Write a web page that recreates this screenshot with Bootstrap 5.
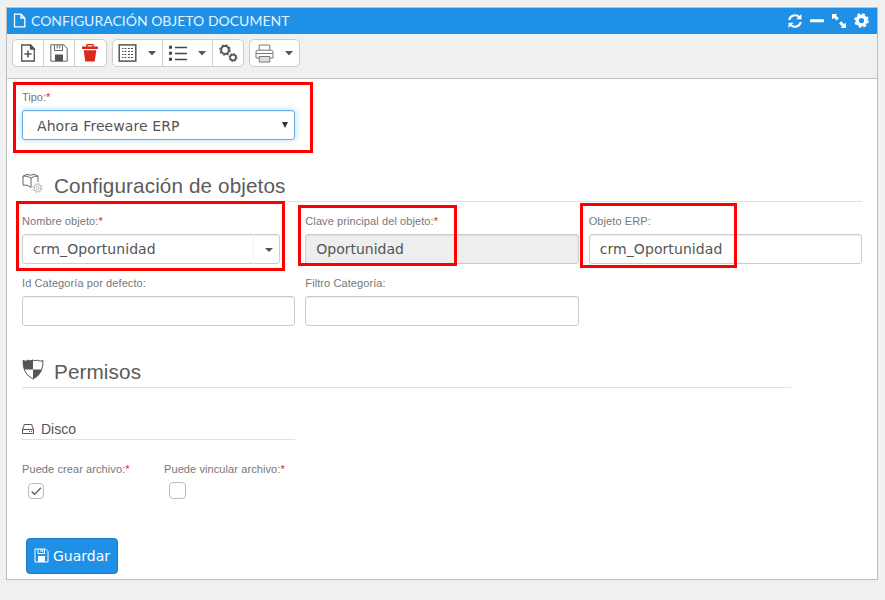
<!DOCTYPE html>
<html lang="es">
<head>
<meta charset="utf-8">
<meta name="viewport" content="width=device-width, initial-scale=1">
<title>Configuración objeto document</title>
<link href="https://cdn.jsdelivr.net/npm/bootstrap@5.3.0/dist/css/bootstrap.min.css" rel="stylesheet">
<style>
body{background:#eff1f0;color:#555;font-family:"Liberation Sans",Arial,sans-serif;height:600px;overflow:hidden}
svg{display:block;flex:none}
.panel{margin:7px 7px 0 6px;height:573px;border:1px solid #bdbfbf;background:#fff}
.panel-head{height:26px;background:#1e91e6;color:#fff;padding:0 8px 0 6px}
.panel-title{font:14px/26px Lato,sans-serif;letter-spacing:0;margin-left:5px;color:#e4f2fd}
.head-icons{gap:8px;margin-top:-1px}
.tools{height:45px;background:#eff1f0;border-bottom:1px solid #bdbfbf;padding:5px 5px 0;gap:5px}
.tools .btn{--bs-btn-bg:#fff;--bs-btn-border-color:#ccc;--bs-btn-color:#555;--bs-btn-padding-x:0;--bs-btn-padding-y:0;--bs-btn-border-radius:5px;height:28px;width:32px;display:flex;align-items:center;justify-content:center}
.tools .btn.trash{width:33px;padding-right:1px}
.tools .btn.wide{width:51px;justify-content:space-between;padding:0 6px 0 5px}
.panel-body{padding:0 15px}
.panel-body .row{--bs-gutter-x:10px}
.field-label{display:block;font-size:11px;line-height:14px;color:#777;letter-spacing:.09px;white-space:nowrap;margin-bottom:6px}
.field-label.tight{letter-spacing:0}
.req{color:#d9232e}
.panel-body .form-control,.panel-body .form-select{font:14px/20px "DejaVu Sans",Verdana,sans-serif;height:30px;padding:4px 10px;border:1px solid #ccc;border-radius:3px;color:#555;box-shadow:inset 0 1px 1px rgba(0,0,0,.075);letter-spacing:.08px}
.panel-body .form-control:disabled{background:#eee;opacity:1;letter-spacing:-.02px}
.panel-body .form-select.active-select{border-color:#66afe9;box-shadow:inset 0 1px 1px rgba(0,0,0,.075),0 0 6px rgba(102,175,233,.5);background:#fff;padding:5px 14px 3px}
.combo{width:258px}
.combo-arrow{position:absolute;right:0;top:0;width:27px;height:30px;border-left:1px solid #f3f3f3;padding:14px 0 0 11px}
.select-arrow{position:absolute;right:7px;top:12px}
.tipo{padding-top:11px;height:92px}
.section-title{font-size:20.7px;line-height:24px;border-bottom:1px solid #e1e1e1;color:#5b5b5b;margin:0;font-weight:400;letter-spacing:.11px}
.objects{height:31px;padding-top:3px}
.objects svg{margin:-1px 11px 0 0}
.labels{padding-top:12px}
.perms{width:769px;margin-top:33px;height:29px}
.perms svg{margin:0 10px 0 0}
.perms span{padding-top:1px}
.disk-head{width:273px;margin:32px 0 0;height:20px;border-bottom:1px solid #e1e1e1;font-size:14px;line-height:18px;font-weight:400}
.disk-head svg{margin:4px 7px 0 0}
.checks{margin-top:22px;height:76px}
.check-one{width:142px}
.panel-body .form-check-input{display:block;width:16px;height:16px;margin:7px 0 0 6px;border:1px solid #bbb;border-radius:4px;background:#fff}
.panel-body .check-big{width:17px;height:17px;margin-left:5px;margin-top:6px}
.tick{position:absolute;left:9px;top:25px}
.save{--bs-btn-bg:#1e91e6;--bs-btn-border-color:#1a79c0;--bs-btn-color:#fff;margin-left:4px;width:92px;height:36px;border-radius:4px;font:14px/34px "DejaVu Sans",Verdana,sans-serif;padding:0 0 0 7px;gap:4px}
.save svg{margin-top:-2px}
.hl{position:absolute;border:3px solid #f00;pointer-events:none;z-index:3}
.hl-tipo{left:-9px;top:-8px;width:300px;height:71px}
.hl-nombre{left:-6px;top:-13px;width:269px;height:70px}
.hl-clave{left:-7px;top:-9px;width:159px;height:61px}
.hl-erp{left:-9px;top:-11px;width:157px;height:65px}
</style>
</head>
<body>
<main class="panel">
<header class="panel-head d-flex align-items-center">
<svg width="13" height="16" viewBox="0 0 13 16" fill="none" stroke="#fff" stroke-width="1.3"><path d="M1.5 1.2H8L11.8 5V13.8H1.5ZM8 1.2V5h3.8"/></svg>
<span class="panel-title">CONFIGURACIÓN OBJETO DOCUMENT</span>
<div class="head-icons d-flex align-items-center ms-auto">
<svg width="14" height="14" viewBox="0 0 14 14" fill="none" stroke="#fff" stroke-width="2"><path d="M1.2 6A6 5.7 0 0 1 11.5 3.2M12.8 8A6 5.7 0 0 1 2.5 10.8"/><path d="M13.5 0v5.2H8.3ZM.5 14V8.8h5.2Z" fill="#fff" stroke="none"/></svg>
<svg width="14" height="14" viewBox="0 0 14 14" fill="#fff"><rect y="5.3" width="14" height="3" rx=".8"/></svg>
<svg width="14" height="14" viewBox="0 0 14 14" fill="#fff"><path d="M0 0h5.4L4 1.5 6.9 4.3 4.8 6.4 1.8 3.7 0 5.4ZM14 14H8.6l1.6-1.6L7 9.6 9.2 7.3l3 3L14 8.6Z"/></svg>
<svg width="15" height="15" viewBox="0 0 16 16"><circle cx="8" cy="8" r="4.6" fill="none" stroke="#fff" stroke-width="3.6"/><circle cx="8" cy="8" r="6.7" fill="none" stroke="#fff" stroke-width="2.2" stroke-dasharray="2.9 2.36"/></svg>
</div>
</header>
<div class="tools d-flex align-items-start">
<div class="btn-group">
<button class="btn" aria-label="Nuevo"><svg width="16" height="18" viewBox="0 0 16 18" fill="none" stroke="#555" stroke-width="1.3"><path d="M1.7 1H10.5L14.3 5V17H1.7Z"/><path d="M10.5 1 14.3 5H10.5Z" fill="#555"/><path d="M8 6.5v7M4.5 10h7" stroke-width="1.6"/></svg></button>
<button class="btn" aria-label="Guardar"><svg width="18" height="18" viewBox="0 0 18 18" fill="none" stroke="#666"><path d="M.8.8H14L17.2 4.5V17.2H.8ZM4.5 1V6.5H12.5V1M7.2 1V4.5M9.8 1V4.5"/><path d="M5 10.5h8v6.7H5Z" fill="#555" stroke="none"/></svg></button>
<button class="btn trash" aria-label="Eliminar"><svg width="16" height="18" viewBox="0 0 16 18" fill="#d9291c"><path d="M0 2.5H4.3V.5Q4.3 0 5 0H11q.7 0 .7.5V2.5H16V5H0ZM1.7 6.2H14.3L12.7 17.5H3.3ZM5.7 1.2V2.5h4.6V1.2Z" fill-rule="evenodd"/></svg></button>
</div>
<div class="btn-group">
<button class="btn wide" aria-label="Tabla"><svg width="19" height="18" viewBox="0 0 19 18" fill="none" stroke="#555"><rect x="1.2" y=".9" width="16.6" height="16.2" stroke-width="1.5"/><path d="M4 4.5h1.5M6.5 4.5h2M10 4.5h2M13 4.5h2M4 7.5h1.5M6.5 7.5h2M10 7.5h2M13 7.5h2M4 10.5h1.5M6.5 10.5h2M10 10.5h2M13 10.5h2M4 13.5h1.5M6.5 13.5h2M10 13.5h2M13 13.5h2"/></svg><svg width="8" height="5" viewBox="0 0 8 5"><path d="M0 0h8L4 4.5Z" fill="#555"/></svg></button>
<button class="btn wide" aria-label="Lista"><svg width="19" height="18" viewBox="0 0 19 18" fill="#444"><path d="M1 1.8h3v3H1ZM1 7.8h3v3H1ZM1 13.8h3v3H1ZM7 2.7h12v1.5H7ZM7 8.7h12v1.5H7ZM7 14.7h12v1.5H7Z"/></svg><svg width="8" height="5" viewBox="0 0 8 5"><path d="M0 0h8L4 4.5Z" fill="#555"/></svg></button>
<button class="btn" aria-label="Opciones"><svg width="19" height="19" viewBox="0 0 19 19" fill="none" stroke="#555"><circle cx="6" cy="6" r="3.9" stroke-width="2"/><circle cx="6" cy="6" r="5.2" stroke-width="1.2" stroke-dasharray="2 2.08"/><circle cx="14" cy="13.5" r="2.9" stroke-width="1.7"/><circle cx="14" cy="13.5" r="4" stroke-width="1" stroke-dasharray="1.5 1.64"/></svg></button>
</div>
<div class="btn-group">
<button class="btn wide" aria-label="Imprimir"><svg width="19" height="19" viewBox="0 0 19 19" fill="none" stroke="#777"><path d="M4.2 6V1H14.8V6M4 14H1V8Q1 6.2 2.8 6.2H16.2Q18 6.2 18 8V14H15M1.3 9.5H17.7"/><path d="M4.2 12.5H14.8V18H4.2Z" fill="#ddd"/></svg><svg width="8" height="5" viewBox="0 0 8 5"><path d="M0 0h8L4 4.5Z" fill="#555"/></svg></button>
</div>
</div>
<div class="panel-body">
<div class="tipo row">
<div class="col-4"><div class="position-relative">
<label class="field-label tight">Tipo:<span class="req">*</span></label>
<div class="position-relative"><div class="form-select active-select">Ahora Freeware ERP</div><svg class="select-arrow" width="6" height="6" viewBox="0 0 6 6"><path d="M0 0h6L3 6Z" fill="#333"/></svg></div>
<div class="hl hl-tipo"></div>
</div></div>
</div>
<h2 class="section-title objects d-flex align-items-start">
<svg width="21" height="21" viewBox="0 0 21 21" fill="none" stroke="#666"><path d="M1 3.2Q5 0 8.5 2.2 12 0 16 3.2V9M1 3.2V12.2Q5 11 9 14.5V5.2Q5 2.2 1 3.2ZM9 5.2Q12 2.5 16 3.2"/><g stroke="#bbb"><circle cx="15.5" cy="15" r="3.6"/><circle cx="15.5" cy="15" r="1.6"/><circle cx="15.5" cy="15" r="4.6" stroke-dasharray="1.8 1.81"/></g></svg>
<span>Configuración de objetos</span></h2>
<div class="row labels">
<div class="col-4"><div class="position-relative"><label class="field-label">Nombre objeto:<span class="req">*</span></label>
<div class="position-relative combo"><input class="form-control" value="crm_Oportunidad"><span class="combo-arrow"><svg width="8" height="4" viewBox="0 0 8 4"><path d="M0 0h8L4 4Z" fill="#555"/></svg></span></div>
<div class="hl hl-nombre"></div></div></div>
<div class="col-4"><div class="position-relative"><label class="field-label">Clave principal del objeto:<span class="req">*</span></label><input class="form-control" value="Oportunidad" disabled>
<div class="hl hl-clave"></div></div></div>
<div class="col-4"><div class="position-relative"><label class="field-label">Objeto ERP:</label><input class="form-control" value="crm_Oportunidad">
<div class="hl hl-erp"></div></div></div>
</div>
<div class="row labels">
<div class="col-4"><label class="field-label">Id Categoría por defecto:</label><input class="form-control"></div>
<div class="col-4"><label class="field-label">Filtro Categoría:</label><input class="form-control"></div>
</div>
<h2 class="section-title perms d-flex align-items-start">
<svg width="22" height="21" viewBox="0 0 22 21"><path d="M1 1.5Q4 3 6.5 1.2 9 2.5 11 1 13 2.5 15.5 1.2 18 3 21 1.5 21.5 15 11 20 .5 15 1 1.5Z" fill="#fff" stroke="#555"/><path d="M1 1.5Q4 3 6.5 1.2 9 2.5 11 1V10.5H2.4Q1 6 1 1.5ZM11 10.5h8.6Q17.5 17 11 20Z" fill="#555"/></svg>
<span>Permisos</span></h2>
<h3 class="disk-head d-flex align-items-start">
<svg width="12" height="10" viewBox="0 0 12 10" fill="none" stroke="#555"><path d="M.5 5.5 2.4.5H9.6L11.5 5.5V9.5H.5ZM.5 5.5h11M7 7.5h1M9 7.5h1"/></svg><span>Disco</span></h3>
<div class="checks d-flex">
<div class="check-one position-relative"><label class="field-label">Puede crear archivo:<span class="req">*</span></label><input class="form-check-input" type="checkbox"><svg class="tick" width="11" height="9" viewBox="0 0 11 9" fill="none" stroke="#666" stroke-width="1.5"><path d="M.7 4.6 3.7 7.2 10 .8"/></svg></div>
<div><label class="field-label">Puede vincular archivo:<span class="req">*</span></label><input class="form-check-input check-big" type="checkbox"></div>
</div>
<button class="btn save d-flex align-items-center"><svg width="15" height="15" viewBox="0 0 15 15" fill="none" stroke="#fff"><path d="M1 1H11.5L14 3.5V14H1ZM4 1V5.5H10.5V1M7 1V4M8.7 1V4"/><path d="M4 8h7v6H4Z" fill="#fff" stroke="none"/></svg><span>Guardar</span></button>
</div>
</main>
<script src="https://cdn.jsdelivr.net/npm/bootstrap@5.3.0/dist/js/bootstrap.bundle.min.js"></script>
</body>
</html>
